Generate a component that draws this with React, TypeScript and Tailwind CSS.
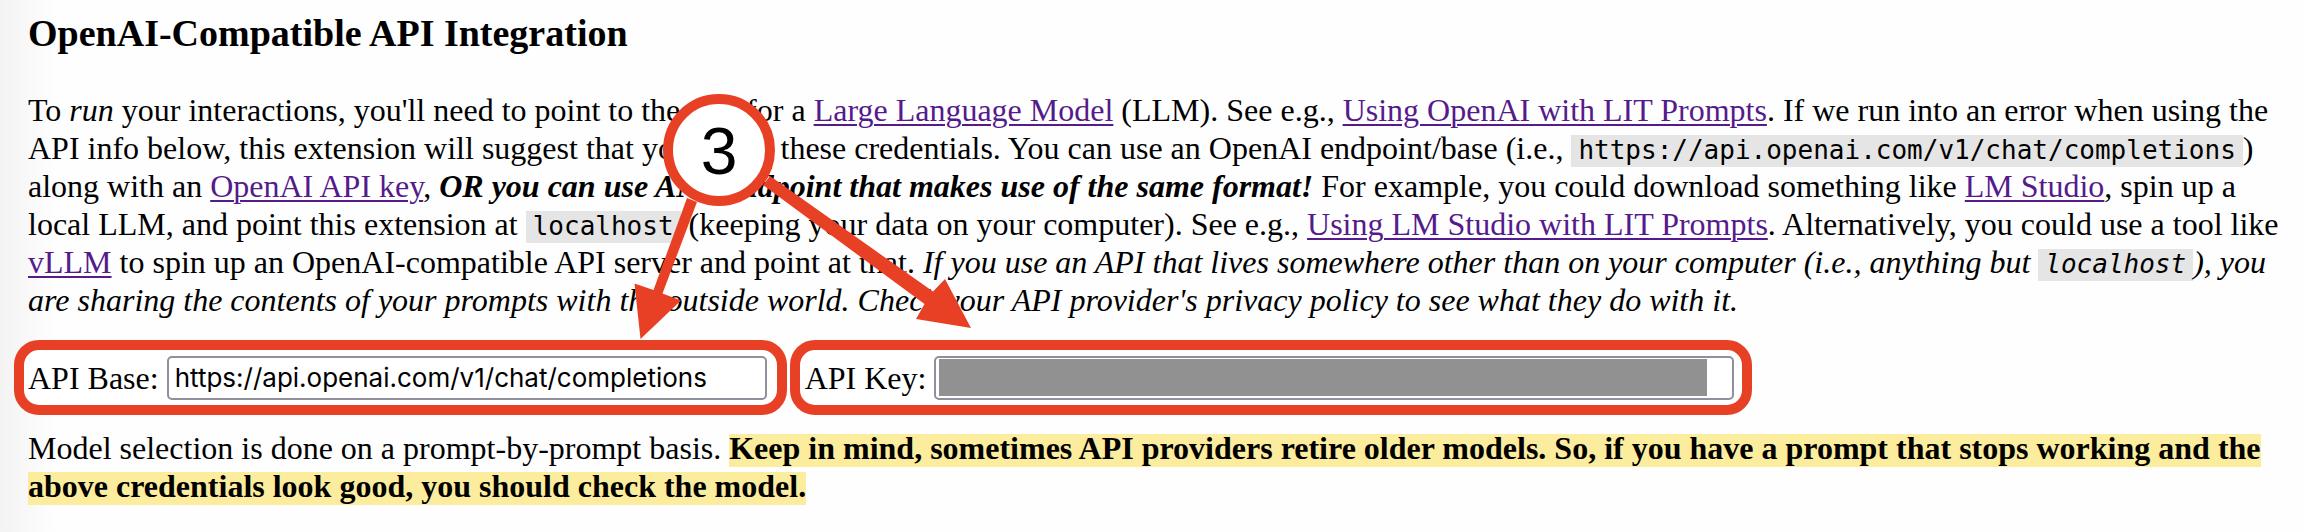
import type { ReactNode } from "react";

function DocLink({ href, children }: { href: string; children: ReactNode }) {
  return (
    <a
      href={href}
      className="text-[#551a8b] underline decoration-2 underline-offset-3"
    >
      {children}
    </a>
  );
}

function Code({ children }: { children: ReactNode }) {
  return (
    <code className="bg-[#e5e5e5] px-[7px] pb-0.5 font-['DejaVu_Sans_Mono',monospace] text-[26px] leading-none">
      {children}
    </code>
  );
}

const inputStyle =
  "h-11 max-w-full rounded-[5px] border-2 border-[#8f8f9d] bg-white px-1.5 font-['Inter',sans-serif] text-[26px] text-black";

function Callout() {
  return (
    <svg
      className="pointer-events-none absolute top-[90px] left-[630px] h-[255px] w-[350px]"
      viewBox="630 90 350 255"
      role="img"
      aria-label="Step 3"
    >
      <g fill="#e84025">
        <path d="M687 198 L697 202 L662.5 293.5 L681 300.5 L640.5 339 L634.5 283.5 L653.5 290 Z" />
        <path d="M763 185 L770 176 L933 291.5 L945 279 L971 328 L916 319 L924.500 304 Z" />
      </g>
      <circle cx="719" cy="150" r="51" fill="#fff" stroke="#e84025" strokeWidth="10" />
      <text
        x="719"
        y="174"
        textAnchor="middle"
        className="font-['Liberation_Sans',sans-serif] text-[66px]"
      >
        3
      </text>
    </svg>
  );
}

export default function App() {
  return (
    <main className="relative min-h-screen bg-[#fefefe] bg-[linear-gradient(to_right,#f3f3f3,#fefefe_56px)] bg-no-repeat pt-[11px] pb-6 font-['Liberation_Serif',serif] text-[32px] leading-[38px] text-black">
      <h3 className="px-7 text-[38px] leading-[44px] font-bold">
        OpenAI-Compatible API Integration
      </h3>

      <p className="mt-9 pr-5 pl-7">
        To <em>run</em> your interactions, you'll need to point to the API for a{" "}
        <DocLink href="#llm">Large Language Model</DocLink> (LLM). See e.g.,{" "}
        <DocLink href="#openai">Using OpenAI with LIT Prompts</DocLink>. If we run into an error
        when using the API info below, this extension will suggest that you check these
        credentials. You can use an OpenAI endpoint/base (i.e.,{" "}
        <Code>https://api.openai.com/v1/chat/completions</Code>) along with an{" "}
        <DocLink href="#api-key">OpenAI API key</DocLink>,{" "}
        <strong>
          <em>OR you can use ANY endpoint that makes use of the same format!</em>
        </strong>{" "}
        For example, you could download something like{" "}
        <DocLink href="#lm-studio">LM Studio</DocLink>, spin up a local LLM, and point this
        extension at <Code>localhost</Code> (keeping your data on your computer). See e.g.,{" "}
        <DocLink href="#using-lm-studio">Using LM Studio with LIT Prompts</DocLink>.
        Alternatively, you could use a tool like <DocLink href="#vllm">vLLM</DocLink> to spin up an
        OpenAI-compatible API server and point at that.{" "}
        <em>
          If you use an API that lives somewhere other than on your computer (i.e., anything but{" "}
          <Code>localhost</Code>), you are sharing the contents of your prompts with the outside
          world. Check your API provider's privacy policy to see what they do with it.
        </em>
      </p>

      <form className="mt-[21px] flex flex-wrap gap-[3px] pl-3.5">
        <div className="flex h-[75px] items-center gap-2 rounded-[25px] border-10 border-[#e84025] bg-white pr-2.5 pl-1">
          <label htmlFor="api-base">API Base:</label>
          <input
            id="api-base"
            type="text"
            defaultValue="https://api.openai.com/v1/chat/completions"
            className={`${inputStyle} w-[600px]`}
          />
        </div>
        <div className="flex h-[75px] items-center gap-2 rounded-[25px] border-10 border-[#e84025] bg-white pr-2 pl-[5px]">
          <label htmlFor="api-key">API Key:</label>
          <div className="relative">
            <input id="api-key" type="text" className={`${inputStyle} block w-[800px]`} />
            <span className="absolute top-[3px] right-[27px] bottom-1 left-[5px] bg-[#919191]" />
          </div>
        </div>
      </form>

      <p className="mt-3.5 pr-5 pl-7">
        Model selection is done on a prompt-by-prompt basis.{" "}
        <strong className="bg-[linear-gradient(transparent_4px,#fbec9e_4px)] pb-px">
          Keep in mind, sometimes API providers retire older models. So, if you have a prompt that
          stops working and the above credentials look good, you should check the model.
        </strong>
      </p>

      <Callout />
    </main>
  );
}
